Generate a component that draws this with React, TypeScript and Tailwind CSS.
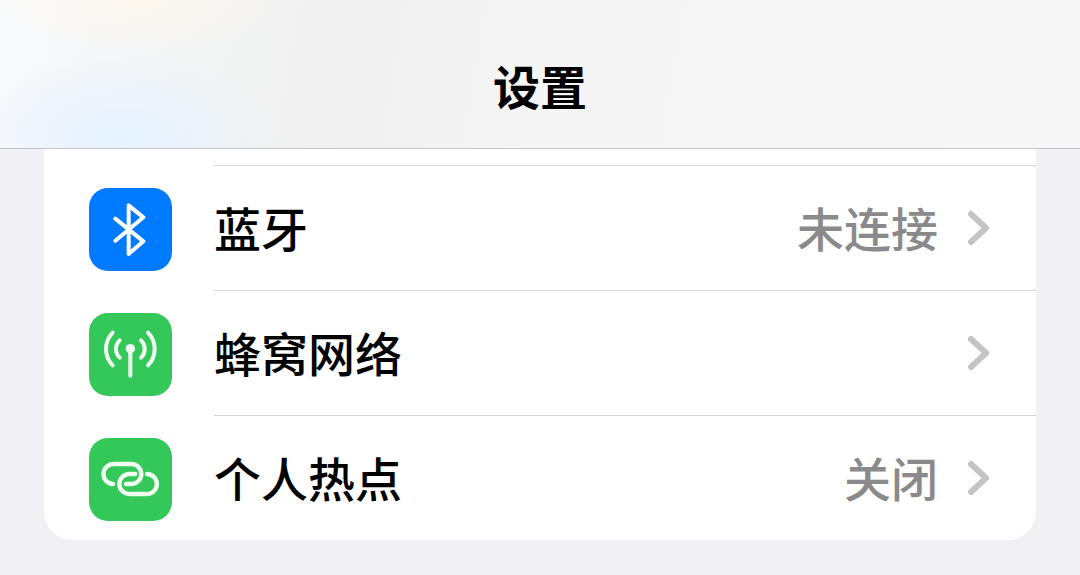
import type { ReactNode } from "react";

type Setting = {
  label: string;
  value?: string;
  tile: string;
  icon: ReactNode;
};

function BluetoothIcon() {
  return (
    <path d="M79 92 163 160 119 198V52L163 88 79 158" strokeWidth="12" />
  );
}

function CellularIcon() {
  return (
    <>
      <circle cx="124" cy="107" r="14" fill="currentColor" stroke="none" />
      <path d="M124 107V188" strokeWidth="12" />
      <path d="M92 82A36 36 0 0 0 92 134M156 82A36 36 0 0 1 156 134" strokeWidth="12" />
      <path d="M71 59A70 70 0 0 0 71 157M177 59A70 70 0 0 1 177 157" strokeWidth="12" />
    </>
  );
}

function HotspotIcon() {
  return (
    <>
      <path d="M72 138A30 30 0 0 1 75 78H127A30 30 0 0 1 127 138H111" strokeWidth="13" />
      <path d="M139 108H121A30 30 0 0 0 121 168H173A30 30 0 0 0 174 108" strokeWidth="13" />
    </>
  );
}

const settings: Setting[] = [
  { label: "蓝牙", value: "未连接", tile: "bg-[#007aff] text-white", icon: <BluetoothIcon /> },
  { label: "蜂窝网络", tile: "bg-[#34c759] text-[#effff0]", icon: <CellularIcon /> },
  { label: "个人热点", value: "关闭", tile: "bg-[#34c759] text-[#effff0]", icon: <HotspotIcon /> },
];

function SettingRow({ label, value, tile, icon }: Setting) {
  return (
    <li>
      <a href="#" className="flex h-[125px] items-stretch pl-[45px]">
        <span className={`mt-[23px] mr-[42px] flex size-[83px] shrink-0 rounded-[19px] ${tile}`}>
          <svg
            viewBox="0 0 249 249"
            className="size-full"
            fill="none"
            stroke="currentColor"
            strokeLinecap="round"
            strokeLinejoin="round"
            aria-hidden="true"
          >
            {icon}
          </svg>
        </span>
        <span className="flex flex-1 items-center justify-between border-t border-[#d5d5d7] pr-[46px]">
          <span className="pb-[3px] text-[47px] leading-none font-medium text-black">{label}</span>
          <span className="flex items-center gap-[30px]">
            {value && (
              <span className="pb-[3px] text-[47px] leading-none font-medium text-[#8a8a8d]">{value}</span>
            )}
            <svg
              viewBox="0 0 22 36"
              className="h-9 w-[22px]"
              fill="none"
              stroke="#c4c4c6"
              strokeWidth="6"
              strokeLinecap="round"
              strokeLinejoin="round"
              aria-hidden="true"
            >
              <path d="M3 4 18 18 3 32" />
            </svg>
          </span>
        </span>
      </a>
    </li>
  );
}

export default function App() {
  return (
    <div className="min-h-screen bg-[#f0f0f5] pb-9 font-['Noto_Sans_CJK_SC',sans-serif]">
      <header className="flex h-[149px] items-end justify-center border-b border-[#c4c5c8] bg-[#f5f5f5] bg-[radial-gradient(ellipse_160px_90px_at_120px_140px,#e5f2ff,transparent),radial-gradient(ellipse_150px_50px_at_140px_0px,#fdf8ee,transparent),linear-gradient(100deg,#f9fafc,#f3f4f4_220px,#f0f0f0_340px,#f5f5f5_540px,#f7f7f7)] pb-10">
        <h1 className="text-[47px] leading-none font-bold text-black">设置</h1>
      </header>
      <main className="mx-11 rounded-b-[28px] bg-white pt-4">
        <ul>
          {settings.map((setting) => (
            <SettingRow key={setting.label} {...setting} />
          ))}
        </ul>
      </main>
    </div>
  );
}
